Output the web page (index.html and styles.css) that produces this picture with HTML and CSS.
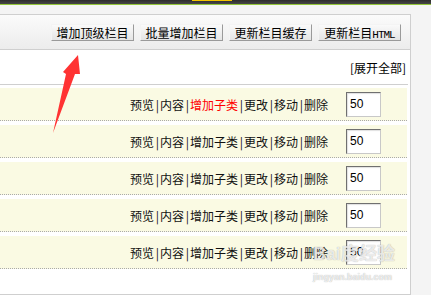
FILE: index.html
```
<html>
<head>
    <meta charset="UTF-8">
    <title>栏目管理</title>
    <link rel="stylesheet" href="styles.css">
</head>
<body>
    <div class="topbar"><span class="topbar-tab"></span></div>

    <div class="page">
        <div class="panel">
            <div class="toolbar">
                <button class="tool-btn">增加顶级栏目</button>
                <button class="tool-btn">批量增加栏目</button>
                <button class="tool-btn">更新栏目缓存</button>
                <button class="tool-btn">更新栏目<span class="latin">HTML</span></button>
            </div>

            <div class="expand"><a href="#">[展开全部]</a></div>

            <ul class="cat-list">
                <li class="cat-row">
                    <span class="ops"><a href="#">预览</a><i class="sep">|</i><a href="#">内容</a><i class="sep">|</i><a href="#" class="hot">增加子类</a><i class="sep">|</i><a href="#">更改</a><i class="sep">|</i><a href="#">移动</a><i class="sep">|</i><a href="#">删除</a></span>
                    <input class="sort" type="text" value="50">
                </li>
                <li class="cat-row">
                    <span class="ops"><a href="#">预览</a><i class="sep">|</i><a href="#">内容</a><i class="sep">|</i><a href="#">增加子类</a><i class="sep">|</i><a href="#">更改</a><i class="sep">|</i><a href="#">移动</a><i class="sep">|</i><a href="#">删除</a></span>
                    <input class="sort" type="text" value="50">
                </li>
                <li class="cat-row">
                    <span class="ops"><a href="#">预览</a><i class="sep">|</i><a href="#">内容</a><i class="sep">|</i><a href="#">增加子类</a><i class="sep">|</i><a href="#">更改</a><i class="sep">|</i><a href="#">移动</a><i class="sep">|</i><a href="#">删除</a></span>
                    <input class="sort" type="text" value="50">
                </li>
                <li class="cat-row">
                    <span class="ops"><a href="#">预览</a><i class="sep">|</i><a href="#">内容</a><i class="sep">|</i><a href="#">增加子类</a><i class="sep">|</i><a href="#">更改</a><i class="sep">|</i><a href="#">移动</a><i class="sep">|</i><a href="#">删除</a></span>
                    <input class="sort" type="text" value="50">
                </li>
                <li class="cat-row">
                    <span class="ops"><a href="#">预览</a><i class="sep">|</i><a href="#">内容</a><i class="sep">|</i><a href="#">增加子类</a><i class="sep">|</i><a href="#">更改</a><i class="sep">|</i><a href="#">移动</a><i class="sep">|</i><a href="#">删除</a></span>
                    <input class="sort" type="text" value="50">
                </li>
            </ul>
        </div>
    </div>

    <!-- red pointer drawn over the toolbar -->
    <svg class="arrow" width="431" height="295" viewBox="0 0 431 295">
        <polygon points="53,133 66,74 63,72 78,55 80,74 75,74" fill="#ff3333"/>
    </svg>

    <div class="watermark">
        <div class="wm-logo">Bai度经验</div>
        <div class="wm-url">jingyan.baidu.com</div>
    </div>
</body>
</html>
```

FILE: styles.css
```
body {
    margin: 0;
    padding: 0;
    background-color: #f4f4f4;
    font-family: "Noto Sans CJK SC", "DejaVu Sans", sans-serif;
    font-size: 12px;
    color: #111;
    position: relative;
    height: 295px;
    overflow: hidden;
}

a {
    color: #111;
    text-decoration: none;
}

.topbar {
    height: 4px;
    background: linear-gradient(#2c2c2c, #464646);
    border-bottom: 1px solid #93c63a;
    display: flex;
}

.topbar-tab {
    margin-left: 192px;
    width: 40px;
    height: 1px;
    background-color: #f2c500;
}

.page {
    padding-top: 9px;
}

.panel {
    width: 410px;
    height: 279px;
    background-color: #fff;
    border-top: 1px solid #cfcfcf;
    border-right: 1px solid #cfcfcf;
    border-bottom: 1px solid #cfcfcf;
}

.toolbar {
    height: 34px;
    display: flex;
    justify-content: flex-end;
    align-items: center;
    gap: 6px;
    padding-right: 9px;
    background: linear-gradient(#fbfbfb, #ececec);
    border-bottom: 1px solid #cfcfcf;
}

.tool-btn {
    width: 83px;
    height: 17px;
    margin-top: 1px;
    padding: 0;
    font-family: "Noto Sans CJK SC", "DejaVu Sans", sans-serif;
    font-size: 12px;
    line-height: 15px;
    color: #000;
    white-space: nowrap;
    background: linear-gradient(#fafafa, #e4e4e4);
    border: 1px solid;
    border-color: #f4f4f4 #9a9a9a #9a9a9a #f4f4f4;
}

.tool-btn .latin {
    font-family: "Liberation Mono", monospace;
    font-size: 11px;
    letter-spacing: -1px;
}

.expand {
    height: 34px;
    margin-right: 2px;
    padding-right: 2px;
    display: flex;
    justify-content: flex-end;
    align-items: center;
    border-bottom: 1px solid #cfcfcf;
}

.expand a {
    color: #000;
}

.cat-list {
    list-style: none;
    margin: 0;
    padding: 3px 3px 0 0;
}

.cat-row {
    height: 32px;
    margin-bottom: 4px;
    padding-right: 26px;
    display: flex;
    justify-content: flex-end;
    align-items: center;
    gap: 18px;
    background-color: #fafae3;
    border-bottom: 1px dotted #aaa;
}

.ops {
    white-space: nowrap;
}

.ops .hot {
    color: #f00;
}

.sep {
    font-style: normal;
    display: inline-block;
    width: 6px;
    text-align: right;
    padding-right: 1px;
    box-sizing: border-box;
}

.sort {
    width: 35px;
    height: 25px;
    box-sizing: border-box;
    padding: 0 0 0 3px;
    font-family: "Liberation Sans", Arial, sans-serif;
    font-size: 12px;
    color: #000;
    background-color: #fff;
    border: 1px solid;
    border-color: #707070 #c8c8c8 #c8c8c8 #707070;
    box-shadow: inset 1px 1px 1px #e0e0e0;
}

.arrow {
    position: absolute;
    left: 0;
    top: 0;
    pointer-events: none;
}

.watermark {
    position: absolute;
    left: 313px;
    top: 243px;
    color: rgba(255, 255, 255, 0.75);
    text-shadow: 0 0 1px rgba(0, 0, 0, 0.35);
    pointer-events: none;
}

.wm-logo {
    font-family: "Liberation Sans", "Noto Sans CJK SC", sans-serif;
    font-size: 18px;
    font-weight: bold;
    line-height: 22px;
}

.wm-url {
    font-family: "Liberation Sans", sans-serif;
    font-size: 9px;
    font-weight: bold;
    line-height: 12px;
    margin-top: 6px;
}
```
